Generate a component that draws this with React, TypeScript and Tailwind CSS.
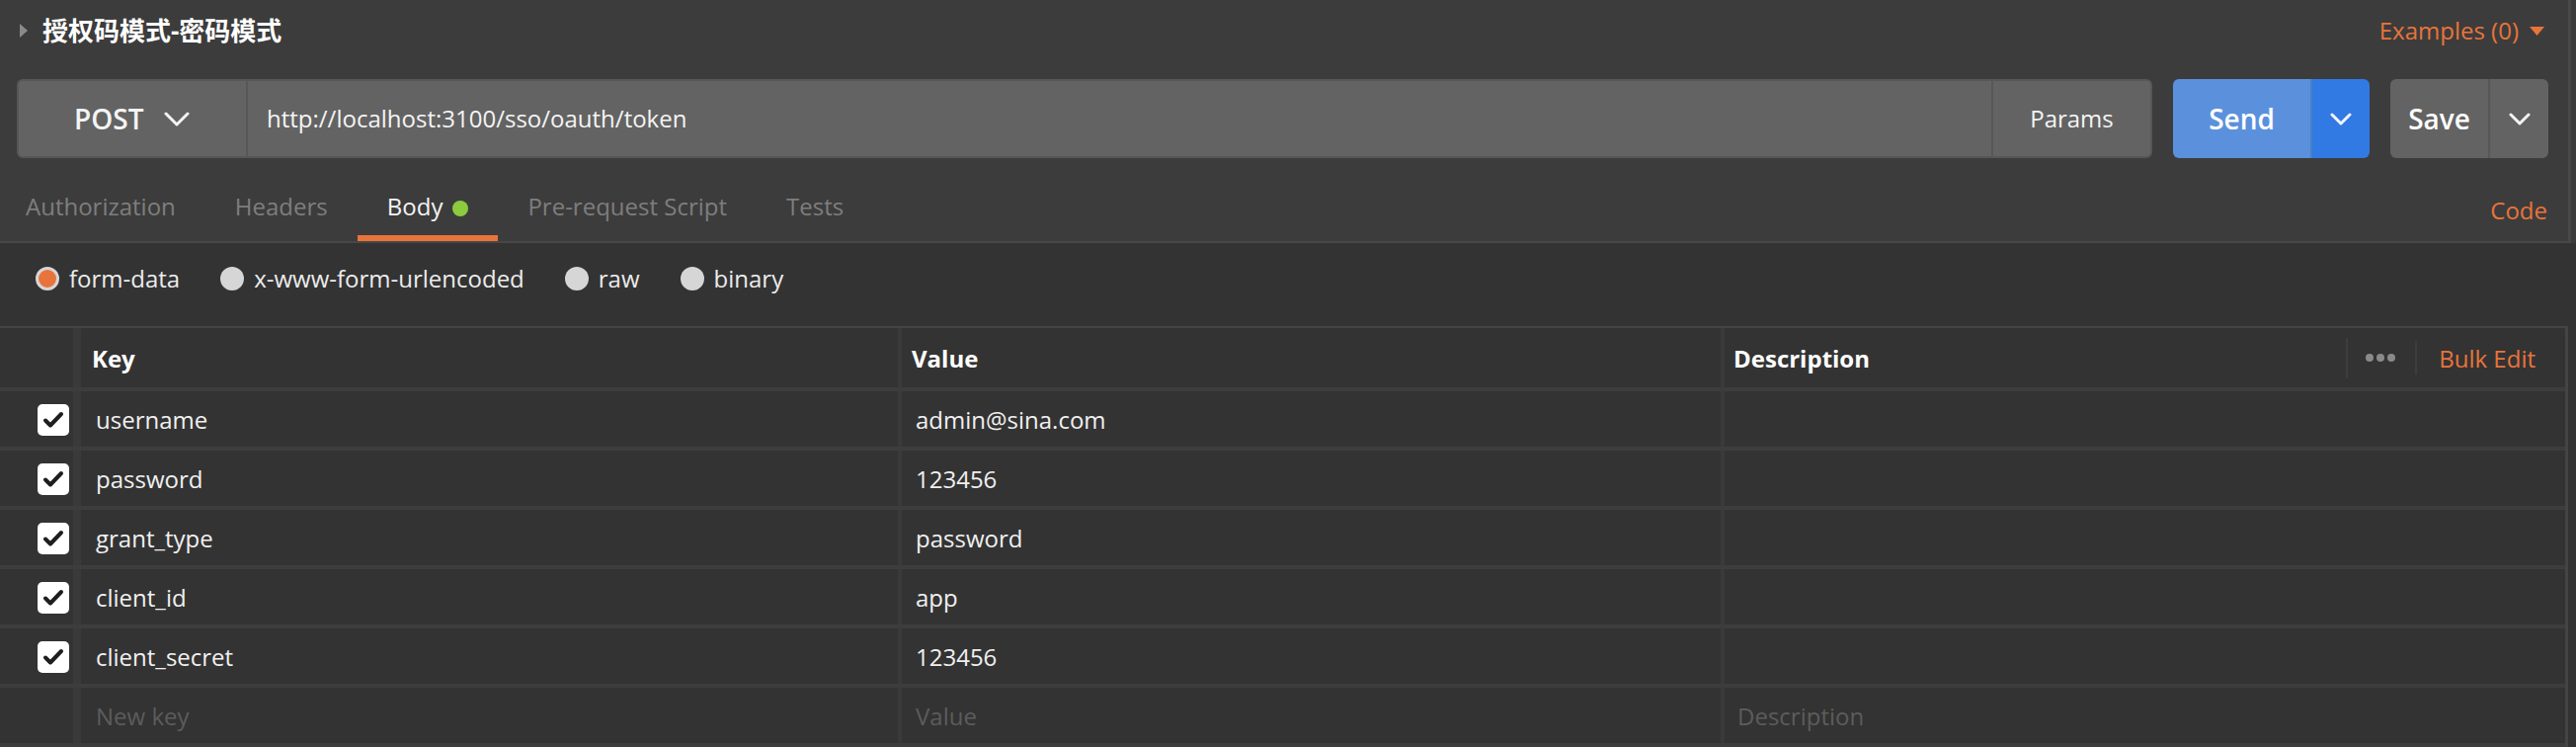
import React from "react";

const Chevron = ({ w = 22, h = 13 }: { w?: number; h?: number }) => (
  <svg width={w} height={h} viewBox={`0 0 ${w} ${h}`}>
    <polyline points={`2,2 ${w / 2},${h - 2} ${w - 2},2`} fill="none" stroke="#f4f4f4" strokeWidth="3" strokeLinecap="round" strokeLinejoin="round" />
  </svg>
);

const Check = () => (
  <div className="w-[32px] h-[32px] rounded-[5px] bg-white flex items-center justify-center">
    <svg width="32" height="32" viewBox="0 0 32 32">
      <polyline points="8,16.5 13,21.5 24,10" fill="none" stroke="#1e1e1e" strokeWidth="4" strokeLinecap="round" strokeLinejoin="round" />
    </svg>
  </div>
);

const Radio = ({ label, selected }: { label: string; selected?: boolean }) => (
  <div className="flex items-center">
    {selected ? (
      <div className="w-[24px] h-[24px] rounded-full border-[3px] border-[#d6d6d6] bg-[#e8743b]" />
    ) : (
      <div className="w-[24px] h-[24px] rounded-full bg-[#d6d6d6]" />
    )}
    <span className="ml-[10px] text-[#ececec]">{label}</span>
  </div>
);

export default function App() {
  const rows: [string, string][] = [
    ["username", "admin@sina.com"],
    ["password", "123456"],
    ["grant_type", "password"],
    ["client_id", "app"],
    ["client_secret", "123456"],
  ];
  const tabs = ["Authorization", "Headers", "Body", "Pre-request Script", "Tests"];
  return (
    <div className="flex w-[2608px] h-[756px] overflow-hidden bg-[#333333] font-['Open_Sans','Noto_Sans_CJK_SC',sans-serif] text-[24px] text-[#f0f0f0]">
      <div className="w-[2600px] flex flex-col shrink-0">
        <div className="bg-[#3c3c3c]">
          {/* title row */}
          <div className="h-[62px] flex items-center">
            <svg className="ml-[20px]" width="8" height="14" viewBox="0 0 8 14">
              <polygon points="0,0 8,7 0,14" fill="#8a8a8a" />
            </svg>
            <span className="ml-[15px] text-[26px] leading-[32px] font-bold text-white font-['Open_Sans','Noto_Sans_CJK_SC',sans-serif]">
              授权码模式-密码模式
            </span>
            <div className="ml-auto mr-[24px] flex items-center text-[#e8743b]">
              <span>Examples (0)</span>
              <svg className="ml-[11px]" width="15" height="9" viewBox="0 0 15 9">
                <polygon points="0,0 15,0 7.5,9" fill="#e8743b" />
              </svg>
            </div>
          </div>
          {/* url row */}
          <div className="mt-[18px] h-[80px] flex pl-[17px]">
            <div className="w-[2162px] h-[80px] flex rounded-[6px] border-2 border-[#575757] bg-[#636363]">
              <div className="w-[232px] border-r-2 border-[#575757] flex items-center pl-[56px]">
                <span className="text-[28px] font-semibold text-[#f4f4f4]">POST</span>
                <span className="ml-[21px] flex items-center">
                  <Chevron w={26} h={15} />
                </span>
              </div>
              <div className="flex-1 flex items-center pl-[19px] text-[#f4f4f4]">
                http://localhost:3100/sso/oauth/token
              </div>
              <div className="w-[161px] border-l-2 border-[#575757] flex items-center justify-center text-[#f4f4f4]">
                Params
              </div>
            </div>
            <div className="ml-[21px] w-[199px] h-[80px] rounded-[6px] overflow-hidden flex">
              <div className="w-[139px] bg-[#5b91dc] flex items-center justify-center text-[28px] font-semibold text-white">
                Send
              </div>
              <div className="flex-1 bg-[#3179e3] border-l-2 border-[#4a80c9] flex items-center justify-center">
                <Chevron />
              </div>
            </div>
            <div className="ml-[21px] w-[160px] h-[80px] rounded-[6px] overflow-hidden flex bg-[#636363]">
              <div className="w-[99px] flex items-center justify-center text-[28px] font-semibold text-white">
                Save
              </div>
              <div className="flex-1 border-l-2 border-[#575757] flex items-center justify-center">
                <Chevron w={22} h={13} />
              </div>
            </div>
          </div>
          {/* tabs */}
          <div className="h-[86px] border-b-2 border-[#474747] flex items-end">
            <div className="flex items-end -ml-[4px]">
              {tabs.map((t) => (
                <div
                  key={t}
                  className={
                    t === "Body"
                      ? "px-[30px] pb-[13px] border-b-[6px] border-[#e8743b] flex items-center leading-[32px] text-[#f4f4f4]"
                      : "px-[30px] pb-[13px] border-b-[6px] border-transparent flex items-center leading-[32px] text-[#7e7e7e]"
                  }
                >
                  <span>{t}</span>
                  {t === "Body" && <span className="ml-[10px] mt-[3px] w-[16px] h-[16px] rounded-full bg-[#8ccb3d]" />}
                </div>
              ))}
            </div>
            <div className="ml-auto mr-[21px] pb-[15px] leading-[32px] text-[#e8743b]">Code</div>
          </div>
        </div>
        {/* body type radios */}
        <div className="h-[72px] flex items-center pl-[36px] gap-[41px]">
          <Radio label="form-data" selected />
          <Radio label="x-www-form-urlencoded" />
          <Radio label="raw" />
          <Radio label="binary" />
        </div>
        {/* table */}
        <div className="mt-[12px] border-t-2 border-r-[3px] border-[#444444] flex-1 flex flex-col">
          <div className="h-[64px] shrink-0 border-b-4 border-[#3d3d3d] flex font-bold text-white">
            <div className="w-[74px]" />
            <div className="w-[835px] border-l-[8px] border-[#3a3a3a] flex items-center pl-[11px] pt-[2px]">Key</div>
            <div className="w-[833px] border-l-4 border-[#3a3a3a] flex items-center pl-[10px] pt-[2px]">Value</div>
            <div className="flex-1 border-l-4 border-[#3a3a3a] flex items-center pl-[9px] pr-[30px]">
              <span className="pt-[2px]">Description</span>
              <div className="ml-auto w-[2px] h-[41px] bg-[#3d3d3d]" />
              <div className="ml-[18px] flex gap-[3px]">
                <span className="w-[8px] h-[8px] rounded-full bg-[#8a8a8a]" />
                <span className="w-[8px] h-[8px] rounded-full bg-[#8a8a8a]" />
                <span className="w-[8px] h-[8px] rounded-full bg-[#8a8a8a]" />
              </div>
              <div className="ml-[20px] w-[2px] h-[34px] bg-[#3d3d3d]" />
              <span className="ml-[22px] pt-[2px] font-normal text-[#e8743b]">Bulk Edit</span>
            </div>
          </div>
          {rows.map(([k, v]) => (
            <div key={k} className="h-[60px] shrink-0 border-b-4 border-[#3d3d3d] flex">
              <div className="w-[74px] flex items-center justify-end pr-[4px] pt-[2px]">
                <Check />
              </div>
              <div className="w-[835px] border-l-[8px] border-[#3a3a3a] flex items-center pl-[15px] pt-[2px]">{k}</div>
              <div className="w-[833px] border-l-4 border-[#3a3a3a] flex items-center pl-[14px] pt-[2px]">{v}</div>
              <div className="flex-1 border-l-4 border-[#3a3a3a]" />
            </div>
          ))}
          <div className="h-[60px] shrink-0 border-b-4 border-[#3d3d3d] flex text-[#5c5c5c]">
            <div className="w-[74px]" />
            <div className="w-[835px] border-l-[8px] border-[#3a3a3a] flex items-center pl-[15px] pt-[2px]">New key</div>
            <div className="w-[833px] border-l-4 border-[#3a3a3a] flex items-center pl-[14px] pt-[2px]">Value</div>
            <div className="flex-1 border-l-4 border-[#3a3a3a] flex items-center pl-[13px] pt-[2px]">Description</div>
          </div>
        </div>
      </div>
      <div className="w-[8px] shrink-0 flex flex-col">
        <div className="h-[246px] border-l-[3px] border-[#484848] bg-[#3c3c3c]" />
        <div className="flex-1 bg-[#333333]" />
      </div>
    </div>
  );
}
